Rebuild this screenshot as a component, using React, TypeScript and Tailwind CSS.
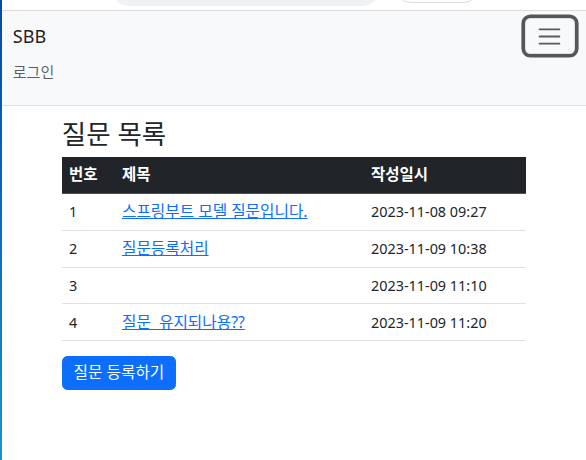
import React from "react";

const questions = [
  { id: 1, subject: "스프링부트 모델 질문입니다.", createdAt: "2023-11-08 09:27" },
  { id: 2, subject: "질문등록처리", createdAt: "2023-11-09 10:38" },
  { id: 3, subject: "", createdAt: "2023-11-09 11:10" },
  { id: 4, subject: "질문  유지되나용??", createdAt: "2023-11-09 11:20" },
];

const TogglerIcon = () => (
  <svg width="27" height="27" viewBox="0 0 30 30" aria-hidden="true">
    <path
      d="M4 7h22M4 15h22M4 23h22"
      stroke="rgba(33,37,41,0.75)"
      strokeWidth="2"
      strokeLinecap="round"
      strokeMiterlimit="10"
    />
  </svg>
);

const App = () => {
  return (
    <div className="flex min-h-screen bg-white font-['Noto_Sans','Noto_Sans_CJK_KR',sans-serif] text-[#212529]">
      {/* desktop edge behind the window */}
      <div className="w-[2px] shrink-0 bg-linear-to-b from-[#0a48a4] to-[#1b90d1]" />

      <div className="min-w-0 flex-1">
        {/* bottom of the browser toolbar */}
        <div className="flex h-[11px] overflow-hidden border-b border-[#dadce0] bg-white">
          <div className="ml-[111px] mt-[-24px] h-[30px] w-[265px] shrink-0 rounded-full bg-[#f0f1f3]" />
          <div className="ml-[17px] mt-[-28px] h-[31px] w-[84px] shrink-0 rounded-full border border-[#dadce0] bg-white" />
        </div>

        <nav className="border-b border-[#dee2e6] bg-[#f8f9fa] px-[10.8px] py-[7.2px]">
          <div className="flex items-center justify-between">
            <a href="#" className="py-[4.5px] text-[18px] leading-[27px] text-black/90">
              SBB
            </a>
            <button
              type="button"
              className="flex items-center rounded-[5.4px] border border-black/10 px-[10.8px] py-[3.6px] shadow-[0_0_0_3.6px_rgba(0,0,0,0.65)]"
            >
              <TogglerIcon />
            </button>
          </div>
          <ul className="mb-[7.2px]">
            <li>
              <a href="#" className="block py-[7.2px] text-[15px] leading-[21.6px] text-black/65">
                로그인
              </a>
            </li>
          </ul>
        </nav>

        <div className="mx-auto my-[14.4px] w-[486px] px-[10.8px]">
          <h2 className="mb-[7.2px] text-[26.5px] font-normal leading-[29.3px]">질문 목록</h2>

          <table className="mb-[14.4px] w-full border-collapse text-left text-[14.4px] leading-[21.6px]">
            <thead className="bg-[#212529] text-[15.5px] text-white">
              <tr>
                <th className="w-[53px] border-b border-[#4d5154] px-[7.2px] py-[7.2px] font-bold">번호</th>
                <th className="w-[249px] border-b border-[#4d5154] px-[7.2px] py-[7.2px] font-bold">제목</th>
                <th className="border-b border-[#4d5154] px-[7.2px] py-[7.2px] font-bold">작성일시</th>
              </tr>
            </thead>
            <tbody>
              {questions.map((q) => (
                <tr key={q.id}>
                  <td className="border-b border-[#dee2e6] px-[7.2px] py-[7.2px]">{q.id}</td>
                  <td className="border-b border-[#dee2e6] px-[7.2px] py-[7.2px]">
                    <a href="#" className="whitespace-pre text-[15.7px] text-[#0d6efd] underline">
                      {q.subject}
                    </a>
                  </td>
                  <td className="border-b border-[#dee2e6] px-[7.2px] py-[7.2px]">{q.createdAt}</td>
                </tr>
              ))}
            </tbody>
          </table>

          <a
            href="#"
            className="inline-block rounded-[5.4px] border border-[#0d6efd] bg-[#0d6efd] px-[10.8px] py-[5.4px] text-[15.7px] leading-[21.6px] text-white"
          >
            질문 등록하기
          </a>
        </div>
      </div>
    </div>
  );
};

export default App;
